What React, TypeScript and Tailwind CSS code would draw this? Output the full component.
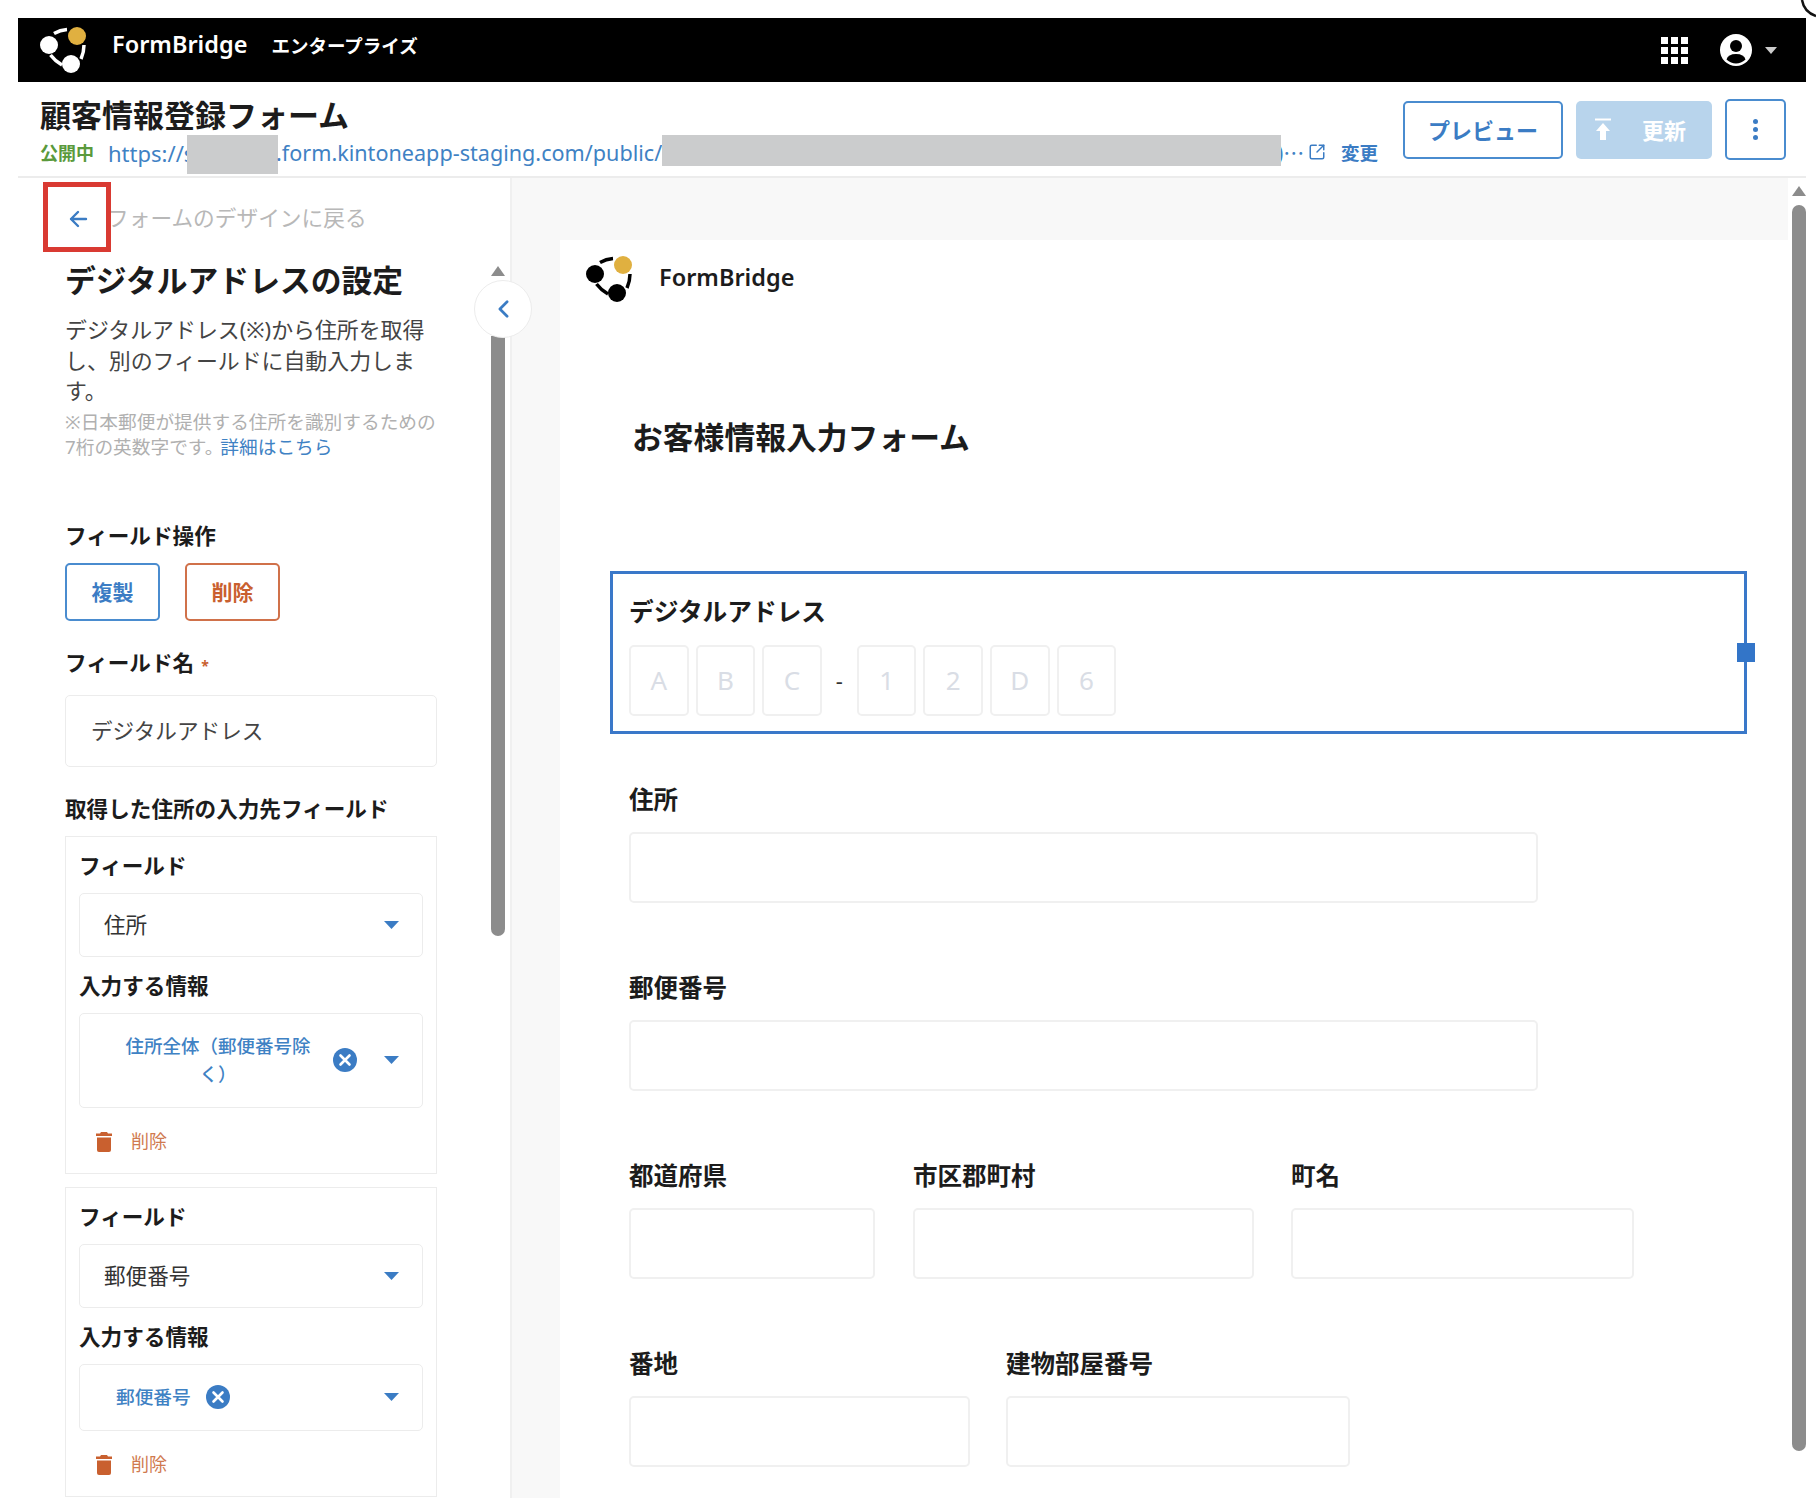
import React from "react";
import { SquareArrowOutUpRight } from "lucide-react";

const BLUE = "#3b7cc4";

function Logo({ color, className }: { color: string; className: string }) {
  return (
    <svg viewBox="0 0 46 46" className={className}>
      <circle cx="9" cy="18" r="9" fill={color} />
      <circle cx="31" cy="37" r="9" fill={color} />
      <circle cx="37" cy="9" r="9" fill="#e0b040" />
      <path d="M14 6.5 Q20 3 27 2.5" stroke={color} strokeWidth="3.5" fill="none" />
      <path d="M44 18 Q44 25 41 32" stroke={color} strokeWidth="3.5" fill="none" />
      <path d="M10.5 28 Q15 34 22 38" stroke={color} strokeWidth="3.5" fill="none" />
    </svg>
  );
}

function Caret() {
  return (
    <svg viewBox="0 0 15 8" className="w-[15px] h-[8px] shrink-0">
      <path d="M0 0 H15 L7.5 8 Z" fill={BLUE} />
    </svg>
  );
}

function XCircle() {
  return (
    <svg viewBox="0 0 24 24" className="w-[24px] h-[24px] shrink-0">
      <circle cx="12" cy="12" r="12" fill={BLUE} />
      <path d="M7.5 7.5 L16.5 16.5 M16.5 7.5 L7.5 16.5" stroke="#fff" strokeWidth="2.6" strokeLinecap="round" />
    </svg>
  );
}

function Trash() {
  return (
    <svg viewBox="0 0 16 20" className="w-[16px] h-[20px] shrink-0">
      <path d="M5 0 H11 L12 1.5 H16 V4 H0 V1.5 H4 Z" fill="#c9602f" />
      <path d="M1 5.5 H15 V18 Q15 20 13 20 H3 Q1 20 1 18 Z" fill="#c9602f" />
    </svg>
  );
}

function Label({ children, className = "" }: { children: React.ReactNode; className?: string }) {
  return <div className={`h-[30px] leading-[30px] text-[21.6px] font-bold text-[#1c1c1c] ${className}`}>{children}</div>;
}

function MappingCard({
  field,
  value,
  wrap,
}: {
  field: string;
  value: React.ReactNode;
  wrap: boolean;
}) {
  return (
    <div
      className={`w-[372px] border border-[#ececec] pl-[13px] pr-[13px] pt-[13px] ${wrap ? "h-[338px]" : "h-[310px]"}`}
    >
      <Label className="pt-[1px]">フィールド</Label>
      <div className="mt-[13px] h-[64px] border border-[#ececec] rounded-[5px] flex items-center pl-[24px] pr-[23px] justify-between">
        <span className="text-[21.6px] text-[#333] mt-[2px]">{field}</span>
        <Caret />
      </div>
      <Label className="mt-[13px] pt-[1px]">入力する情報</Label>
      <div
        className={`mt-[13px] border border-[#ececec] rounded-[5px] flex items-center pr-[23px] justify-between ${
          wrap ? "h-[95px]" : "h-[67px]"
        }`}
      >
        {value}
        <Caret />
      </div>
      <div className="flex items-center pl-[17px] mt-[19px] h-[30px]">
        <Trash />
        <span className="ml-[19px] text-[18px] text-[#d07a50]">削除</span>
      </div>
    </div>
  );
}

function Field({ label, className }: { label: string; className: string }) {
  return (
    <div className={className}>
      <div className="h-[32px] leading-[32px] text-[24.5px] font-bold text-[#1c1c1c]">{label}</div>
      <div className="mt-[16px] h-[71px] border-2 border-[#f0f0f0] rounded-[5px]" />
    </div>
  );
}

function CharBox({ c }: { c: string }) {
  return (
    <div className="w-[59.6px] h-[71px] border-2 border-[#f0f0f0] rounded-[5px] flex items-center justify-center text-[26px] text-[#d9dde5]">
      {c}
    </div>
  );
}

export default function App() {
  return (
    <div className="relative w-[1816px] h-[1512px] overflow-hidden bg-white pl-[18px] pr-[10px] pt-[18px] font-['Noto_Sans','Noto_Sans_CJK_JP',sans-serif]">
      <svg viewBox="0 0 16 18" className="absolute right-0 top-0 w-[16px] h-[18px]">
        <path d="M2 0 Q4 12 16 16" stroke="#111" strokeWidth="2.5" fill="none" />
      </svg>

      {/* Global header */}
      <header className="h-[64px] bg-black flex items-center pl-[22px] pr-[29px]">
        <Logo color="#fff" className="w-[46px] h-[46px] shrink-0" />
        <span className="ml-[26px] mb-[10px] text-[23.5px] font-semibold text-white">FormBridge</span>
        <span className="ml-[24px] mb-[9px] text-[18.5px] font-bold text-white">エンタープライズ</span>
        <div className="ml-auto flex items-center">
          <div className="grid grid-cols-3 gap-[3px]">
            {[0, 1, 2, 3, 4, 5, 6, 7, 8].map((i) => (
              <div key={i} className="w-[7px] h-[7px] bg-white" />
            ))}
          </div>
          <svg viewBox="0 0 32 32" className="ml-[32px] w-[32px] h-[32px]">
            <circle cx="16" cy="16" r="16" fill="#fff" />
            <circle cx="16" cy="12" r="6" fill="#000" />
            <path d="M6.5 25.5 Q8 20 16 20 Q24 20 25.5 25.5 Q21 29.5 16 29.5 Q11 29.5 6.5 25.5 Z" fill="#000" />
          </svg>
          <svg viewBox="0 0 12 7" className="ml-[13px] w-[12px] h-[7px]">
            <path d="M0 0 H12 L6 7 Z" fill="#ccc" />
          </svg>
        </div>
      </header>

      {/* Toolbar */}
      <div className="h-[96px] border-b-2 border-[#ececec] flex justify-between pl-[22px] pr-[20px]">
        <div className="pt-[13px]">
          <div className="h-[40px] leading-[40px] text-[31px] font-bold text-[#1c1c1c]">顧客情報登録フォーム</div>
          <div className="flex items-start h-[40px]">
            <span className="w-[55px] mt-[4px] text-[18px] leading-[28px] font-bold text-[#5a9a3c] shrink-0">公開中</span>
            <span className="ml-[13px] w-[88px] mt-[2px] text-[22px] leading-[32px] text-[#3f82c4] shrink-0">https://s</span>
            <div className="-ml-[9px] w-[91px] h-[39px] bg-[#cbcccd] shrink-0" />
            <span className="-ml-[2px] w-[386px] mt-[2px] text-[21.6px] leading-[32px] text-[#3f82c4] shrink-0 whitespace-nowrap">
              .form.kintoneapp-staging.com/public/
            </span>
            <div className="relative z-10 w-[619px] h-[31px] bg-[#cbcccd] shrink-0" />
            <span className="-ml-[4px] mt-[2px] w-[31px] text-[21px] leading-[32px] text-[#3f82c4] shrink-0 whitespace-nowrap">)⋯</span>
            <SquareArrowOutUpRight className="mt-[8px] w-[18px] h-[18px] text-[#3b7cc4] shrink-0" strokeWidth={2} />
            <span className="ml-[15px] mt-[4px] text-[18.5px] leading-[28px] font-bold text-[#3b7cc4] shrink-0">変更</span>
          </div>
        </div>
        <div className="flex items-start pt-[19px]">
          <div className="w-[160px] h-[58px] border-2 border-[#4a8ccf] rounded-[5px] flex items-center justify-center text-[22px] font-bold text-[#3b7cc4]">
            プレビュー
          </div>
          <div className="ml-[13px] w-[136px] h-[58px] rounded-[5px] bg-[#b8d4ec] flex items-center pl-[18px] text-[22px] font-bold text-white">
            <svg viewBox="0 0 18 24" className="w-[18px] h-[24px]">
              <path d="M1 1.5 H17" stroke="#fff" strokeWidth="2" />
              <path d="M9 5 L16 13 H12 V22 H6 V13 H2 Z" fill="#fff" />
            </svg>
            <span className="ml-[30px]">更新</span>
          </div>
          <div className="ml-[13px] -mt-[2px] w-[61px] h-[61px] border-2 border-[#4a8ccf] rounded-[5px] flex flex-col items-center justify-center gap-[3px]">
            <div className="w-[5px] h-[5px] rounded-full bg-[#3b7cc4]" />
            <div className="w-[5px] h-[5px] rounded-full bg-[#3b7cc4]" />
            <div className="w-[5px] h-[5px] rounded-full bg-[#3b7cc4]" />
          </div>
        </div>
      </div>

      {/* Main */}
      <div className="flex h-[1320px]">
        <aside className="relative z-10 w-[494px] shrink-0 border-r-2 border-[#f0f0f0] pl-[47px] pt-[21px]">
          <div className="flex items-center h-[40px]">
            <svg viewBox="0 0 20 20" className="ml-[3px] w-[20px] h-[20px]" fill="none">
              <path d="M18 10 H3 M10 3 L3 10 L10 17" stroke={BLUE} strokeWidth="2.4" strokeLinecap="round" strokeLinejoin="round" />
            </svg>
            <span className="ml-[19px] mb-[2px] text-[21.7px] text-[#b8b8b8] whitespace-nowrap">フォームのデザインに戻る</span>
          </div>
          <h1 className="mt-[19px] h-[44px] leading-[44px] text-[30.8px] font-bold text-[#1c1c1c] whitespace-nowrap">
            デジタルアドレスの設定
          </h1>
          <p className="mt-[13px] w-[385px] text-[21.9px] leading-[30.5px] text-[#444] whitespace-nowrap">
            デジタルアドレス(※)から住所を取得
            <br />
            し、別のフィールドに自動入力しま
            <br />
            す。
          </p>
          <p className="mt-[2px] w-[375px] text-[18.7px] leading-[25px] text-[#b0b0b0] whitespace-nowrap">
            ※日本郵便が提供する住所を識別するための
            <br />
            7桁の英数字です。<span className="-ml-[3px] text-[#3f82c4]">詳細はこちら</span>
          </p>
          <Label className="mt-[62px]">フィールド操作</Label>
          <div className="mt-[12px] flex gap-[25px]">
            <div className="w-[95px] h-[58px] pt-[3px] border-2 border-[#4a8ccf] rounded-[5px] flex items-center justify-center text-[21px] font-bold text-[#3b7cc4]">
              複製
            </div>
            <div className="w-[95px] h-[58px] pt-[3px] border-2 border-[#d0714a] rounded-[5px] flex items-center justify-center text-[21px] font-bold text-[#c9602f]">
              削除
            </div>
          </div>
          <Label className="mt-[26px] pt-[1px]">
            フィールド名<span className="ml-[7px] text-[14px] text-[#c9602f]">*</span>
          </Label>
          <div className="mt-[18px] w-[372px] h-[72px] pt-[1px] border border-[#ececec] rounded-[5px] flex items-center pl-[25px] text-[21.6px] text-[#444]">
            デジタルアドレス
          </div>
          <Label className="mt-[26px] pt-[1px]">取得した住所の入力先フィールド</Label>
          <div className="mt-[13px]">
            <MappingCard
              field="住所"
              wrap
              value={
                <div className="flex items-center pl-[38px] flex-1">
                  <span className="w-[200px] text-center text-[18.5px] leading-[28px] font-medium text-[#3f82c4]">
                    住所全体（郵便番号除く）
                  </span>
                  <span className="ml-[15px]">
                    <XCircle />
                  </span>
                </div>
              }
            />
          </div>
          <div className="mt-[13px]">
            <MappingCard
              field="郵便番号"
              wrap={false}
              value={
                <div className="flex items-center pl-[36px] flex-1">
                  <span className="text-[18.7px] font-medium text-[#3f82c4]">郵便番号</span>
                  <span className="ml-[15px]">
                    <XCircle />
                  </span>
                </div>
              }
            />
          </div>

          {/* Overlays */}
          <div className="absolute left-[25px] top-[4px] w-[68px] h-[70px] border-[5px] border-[#d93a32]" />
          <div className="absolute left-[473px] top-[158px] w-[14px] h-[600px] rounded-b-[7px] bg-[#8c8c8c]" />
          <svg viewBox="0 0 14 10" className="absolute left-[473px] top-[88px] w-[14px] h-[10px]">
            <path d="M7 0 L14 10 H0 Z" fill="#8c8c8c" />
          </svg>
          <div className="absolute left-[456px] top-[102px] w-[58px] h-[58px] rounded-full bg-white border border-[#ececec] flex items-center justify-center">
            <svg viewBox="0 0 12 20" className="w-[11px] h-[18px]" fill="none">
              <path d="M10 2 L2 10 L10 18" stroke={BLUE} strokeWidth="3" strokeLinecap="round" strokeLinejoin="round" />
            </svg>
          </div>
        </aside>

        <div className="flex-1 bg-[#f8f8f8] pl-[48px] pt-[62px]">
          <main className="h-full bg-white pt-[16px] pl-[50px] overflow-hidden">
            <div className="flex items-center -ml-[24px]">
              <Logo color="#000" className="w-[46px] h-[46px] shrink-0" />
              <span className="ml-[27px] mb-[3px] text-[23.5px] font-semibold text-[#1c1c1c]">FormBridge</span>
            </div>
            <h2 className="mt-[112px] ml-[22px] h-[46px] leading-[46px] text-[30.8px] font-bold text-[#1c1c1c]">
              お客様情報入力フォーム
            </h2>
            <section className="relative mt-[111px] w-[1137px] h-[163px] border-[3px] border-[#3a78c9] pl-[16px] pt-[21px]">
              <div className="h-[34px] leading-[34px] text-[24.7px] font-bold text-[#1c1c1c]">デジタルアドレス</div>
              <div className="mt-[16px] flex items-center gap-[7px]">
                <CharBox c="A" />
                <CharBox c="B" />
                <CharBox c="C" />
                <span className="w-[21px] text-center text-[22px] text-[#333]">-</span>
                <CharBox c="1" />
                <CharBox c="2" />
                <CharBox c="D" />
                <CharBox c="6" />
              </div>
              <div className="absolute -right-[11px] top-[69px] w-[18px] h-[19px] bg-[#3375c8]" />
            </section>
            <div className="pl-[19px] mt-[50px]">
              <Field label="住所" className="h-[188px] w-[909px]" />
              <Field label="郵便番号" className="h-[188px] w-[909px]" />
              <div className="flex h-[188px]">
                <Field label="都道府県" className="w-[246px]" />
                <Field label="市区郡町村" className="ml-[38px] w-[341px]" />
                <Field label="町名" className="ml-[37px] w-[343px]" />
              </div>
              <div className="flex">
                <Field label="番地" className="w-[341px]" />
                <Field label="建物部屋番号" className="ml-[36px] w-[344px]" />
              </div>
            </div>
          </main>
        </div>

        <div className="relative w-[18px] shrink-0 bg-white">
          <svg viewBox="0 0 14 10" className="absolute left-[4px] top-[8px] w-[14px] h-[10px]">
            <path d="M7 0 L14 10 H0 Z" fill="#8c8c8c" />
          </svg>
          <div className="absolute left-[4px] top-[27px] w-[14px] h-[1246px] rounded-[7px] bg-[#8c8c8c]" />
        </div>
      </div>
    </div>
  );
}
